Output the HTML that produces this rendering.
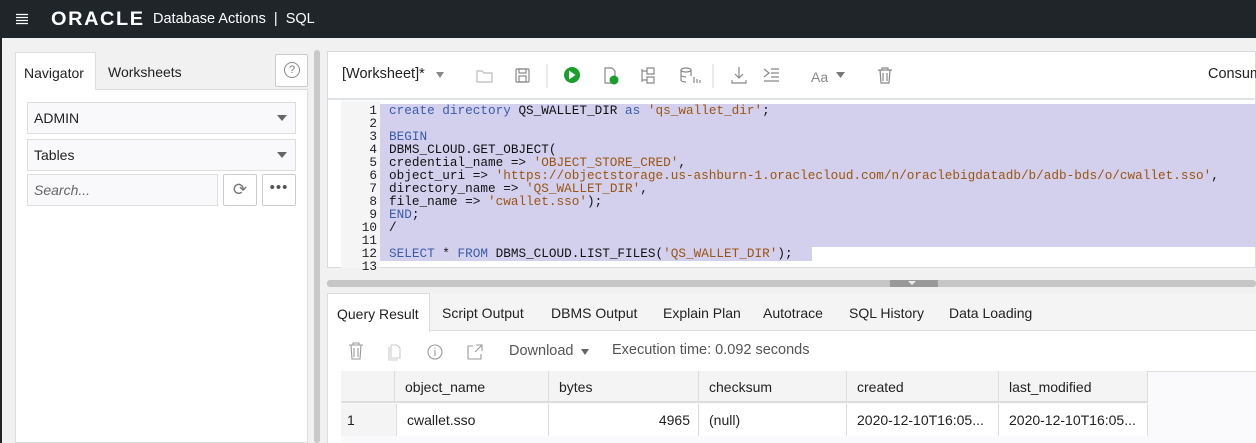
<!DOCTYPE html>
<html><head><meta charset="utf-8"><style>
*{box-sizing:border-box;margin:0;padding:0}
body{width:1256px;height:443px;overflow:hidden;background:#f1f1f1;font-family:"Liberation Sans",sans-serif;font-size:14px;color:#222;position:relative}
.a{position:absolute}
.top{left:0;top:0;width:1256px;height:38px;background:#1f2529;color:#fff}
.code{font-family:"Liberation Mono",monospace;font-size:12.7px;line-height:13px;white-space:pre;color:#111}
.k{color:#3a5ca8}.s{color:#9a5410}
.ln{font-family:"Liberation Mono",monospace;font-size:12.7px;line-height:13px;text-align:right;color:#222;white-space:pre}
.tab{top:293px;height:38px;line-height:40px;font-size:14px;color:#222}
.th,.td{position:absolute;height:32px;line-height:32px;padding-left:10px;font-size:14px;border-right:1px solid #ddd}
.th{background:#f4f4f4;top:371px;border-bottom:2px solid #ddd}
.td{background:#fff;top:404px}
svg{position:absolute}
</style></head><body>
<div class="a" style="left:0;top:38px;width:2px;height:405px;background:#222"></div>
<div class="a top">
 <svg style="left:15px;top:13px" width="14" height="12" stroke="#fff" stroke-width="1.2"><path d="M1 1.5h12M1 4.5h12M1 7.5h12M1 10.5h12"/></svg>
 <div class="a" style="left:51px;top:9px;font-size:19px;font-weight:bold;letter-spacing:1.5px;transform:scaleX(1.05);transform-origin:left">ORACLE</div>
 <div class="a" style="left:153px;top:11px;font-size:14.5px">Database Actions &nbsp;|&nbsp; SQL</div>
</div>
<!-- left panel -->
<div class="a" style="left:15px;top:89px;width:293px;height:354px;background:#fff;border:1px solid #ddd"></div>
<div class="a" style="left:15px;top:52px;width:81px;height:38px;background:#fff;border:1px solid #ddd;border-bottom:none;line-height:40px;padding-left:8px">Navigator</div>
<div class="a" style="left:108px;top:52px;line-height:40px">Worksheets</div>
<div class="a" style="left:275px;top:54px;width:33px;height:33px;background:#fff;border:1px solid #ccc;border-radius:2px"></div>
<div class="a" style="left:284px;top:62px;width:16px;height:16px;border:1px solid #888;border-radius:50%;font-size:11px;line-height:14px;text-align:center;color:#777">?</div>
<div class="a" style="left:27px;top:102px;width:269px;height:32px;background:#f9f9fb;border:1px solid #ddd;line-height:30px;padding-left:6px">ADMIN</div>
<div class="a" style="left:27px;top:139px;width:269px;height:32px;background:#f9f9fb;border:1px solid #ddd;line-height:30px;padding-left:6px">Tables</div>
<div class="a" style="left:277px;top:115px;border:5px solid transparent;border-top:6px solid #666"></div>
<div class="a" style="left:277px;top:152px;border:5px solid transparent;border-top:6px solid #666"></div>
<div class="a" style="left:27px;top:174px;width:191px;height:32px;background:#f9f9fb;border:1px solid #ddd;line-height:30px;padding-left:6px;font-style:italic;color:#666">Search...</div>
<div class="a" style="left:223px;top:174px;width:34px;height:32px;background:#fff;border:1px solid #ccc;border-radius:2px;text-align:center;line-height:30px;color:#777;font-size:17px">⟳</div>
<div class="a" style="left:262px;top:174px;width:34px;height:32px;background:#fff;border:1px solid #ccc;border-radius:2px;text-align:center;line-height:26px;color:#555;font-size:15px;letter-spacing:1px">•••</div>
<!-- splitter -->
<div class="a" style="left:314px;top:50px;width:6px;height:393px;background:#c9c9c9;border-radius:3px"></div>
<!-- editor -->
<div class="a" style="left:327px;top:51px;width:929px;height:217px;background:#fff;border:1px solid #d6dbe0"></div>
<div class="a" style="left:327px;top:98px;width:929px;height:2px;background:#dfe3e6"></div>
<div class="a" style="left:342px;top:66px;font-size:14.5px">[Worksheet]*</div>
<div class="a" style="left:436px;top:72px;border:4.5px solid transparent;border-top:6px solid #888"></div>
<svg style="left:470px;top:62px" width="440" height="28" fill="none" stroke="#888" stroke-width="1.2">
 <path d="M7 9h5l2 2h8v9H7z" stroke="#bbb"/>
 <rect x="46" y="7" width="13" height="13" rx="1"/><rect x="49" y="7" width="7" height="4"/><rect x="49" y="14" width="7" height="6"/>
 <line x1="77" y1="2" x2="77" y2="26" stroke="#ddd"/>
 <circle cx="102" cy="13" r="8" fill="#1a9e2c" stroke="none"/><path d="M99 8.5l6.5 4.5-6.5 4.5z" fill="#fff" stroke="none"/>
 <path d="M135 6h7l3 3v12h-10z"/><circle cx="144" cy="18" r="4.5" fill="#1a9e2c" stroke="none"/>
 <path d="M172 7v13M172 9h5M172 18h5M177 6h7v6h-7zM177 15h7v6h-7z"/>
 <ellipse cx="216" cy="8" rx="5" ry="2"/><path d="M211 8v10c0 1 2 2 5 2M221 8v6M211 13c0 1 2 2 5 2M224 15v6M227 17v4M230 18v3"/>
 <line x1="243" y1="2" x2="243" y2="26" stroke="#ddd"/>
 <path d="M269 5v11M265 12l4 4 4-4M262 18v3h14v-3"/>
 <path d="M294 7l5 4-5 4M301 7h8M301 11h8M301 15h8M294 19h15"/>
 <text x="341" y="20" font-size="14" fill="#888" stroke="none" font-family="Liberation Sans">Aa</text>
 <path d="M366 10h9l-4.5 6z" fill="#777" stroke="none"/>
 <path d="M408 8h14M412 8V6h6v2M410 8l1 13h8l1-13M413 11v8M417 11v8"/>
</svg>
<div class="a" style="left:1208px;top:66px;font-size:14.5px">Consum</div>
<div class="a" style="left:341px;top:101px;width:39px;height:167px;background:#f5f5f5"></div>
<div class="a" style="left:380px;top:104px;width:876px;height:143px;background:#d3d0ee"></div>
<div class="a" style="left:380px;top:246px;width:432px;height:15px;background:#d3d0ee"></div>
<div class="a ln" style="left:341px;top:104px;width:36px">1
2
3
4
5
6
7
8
9
10
11
12
13</div>
<div class="a code" style="left:389px;top:104px"><span class="k">create directory</span> QS_WALLET_DIR <span class="k">as</span> <span class="s">'qs_wallet_dir'</span>;

<span class="k">BEGIN</span>
DBMS_CLOUD.GET_OBJECT(
credential_name => <span class="s">'OBJECT_STORE_CRED'</span>,
object_uri => <span class="s">'https://objectstorage.us-ashburn-1.oraclecloud.com/n/oraclebigdatadb/b/adb-bds/o/cwallet.sso'</span>,
directory_name => <span class="s">'QS_WALLET_DIR'</span>,
file_name => <span class="s">'cwallet.sso'</span>);
<span class="k">END</span>;
/

<span class="k">SELECT</span> * <span class="k">FROM</span> DBMS_CLOUD.LIST_FILES(<span class="s">'QS_WALLET_DIR'</span>);</div>
<!-- h splitter -->
<div class="a" style="left:327px;top:280px;width:929px;height:7px;background:#c6c6c6;border-radius:3px"></div>
<div class="a" style="left:890px;top:280px;width:48px;height:7px;background:#999"></div>
<div class="a" style="left:908px;top:281px;border:4px solid transparent;border-top:4px solid #eee"></div>
<!-- results -->
<div class="a" style="left:327px;top:293px;width:929px;height:150px;background:#fff;border-left:1px solid #ddd"></div>
<div class="a" style="left:327px;top:293px;width:929px;height:38px;background:#f4f4f4;border-bottom:1px solid #ddd"></div>
<div class="a tab" style="left:327px;width:103px;background:#fff;border:1px solid #ddd;border-bottom:none;height:39px;padding-left:9px">Query Result</div>
<div class="a tab" style="left:442px">Script Output</div>
<div class="a tab" style="left:551px">DBMS Output</div>
<div class="a tab" style="left:663px">Explain Plan</div>
<div class="a tab" style="left:763px">Autotrace</div>
<div class="a tab" style="left:849px">SQL History</div>
<div class="a tab" style="left:949px">Data Loading</div>
<svg style="left:345px;top:340px" width="150" height="24" fill="none" stroke="#999" stroke-width="1.1">
 <path d="M4 5h14M8 5V3h6v2M6 5l1 14h8l1-14M9 8v9M13 8v9"/>
 <path d="M46 5h6l3 3v10h-9z M44 7v13h9" stroke="#ccc"/>
 <circle cx="90" cy="12" r="7"/><path d="M90 10v6M90 7.5v1"/>
 <path d="M128 6h-5v13h13v-5M131 5h6v6M137 5l-7 7"/>
</svg>
<div class="a" style="left:509px;top:343px;color:#555;font-size:14.5px">Download</div>
<div class="a" style="left:581px;top:349px;border:4.5px solid transparent;border-top:6px solid #666"></div>
<div class="a" style="left:612px;top:342px;color:#555;font-size:14.5px">Execution time: 0.092 seconds</div>
<div class="a" style="left:341px;top:371px;width:915px;height:72px;background:#fafafc;border-top:1px solid #ddd"></div>
<div class="th" style="left:341px;width:54px"></div>
<div class="th" style="left:395px;width:154px">object_name</div>
<div class="th" style="left:549px;width:150px">bytes</div>
<div class="th" style="left:699px;width:148px">checksum</div>
<div class="th" style="left:847px;width:152px">created</div>
<div class="th" style="left:999px;width:149px">last_modified</div>
<div class="td" style="left:341px;width:56px;background:#f4f4f4;padding-left:6px">1</div>
<div class="td" style="left:397px;width:152px">cwallet.sso</div>
<div class="td" style="left:549px;width:150px;text-align:right;padding-right:8px">4965</div>
<div class="td" style="left:699px;width:148px">(null)</div>
<div class="td" style="left:847px;width:152px">2020-12-10T16:05...</div>
<div class="td" style="left:999px;width:149px">2020-12-10T16:05...</div>
</body></html>
